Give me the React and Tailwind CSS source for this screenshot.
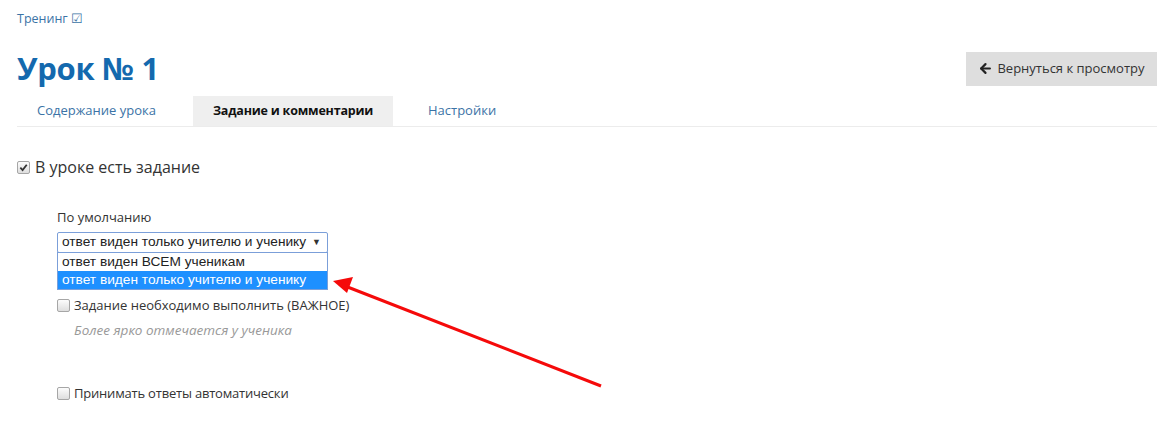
import { ArrowLeft } from 'lucide-react';

function Checkbox({ checked }) {
  return (
    <span className="inline-flex w-[13px] h-[13px] shrink-0 items-center justify-center rounded-[2px] border border-[#a6a6a6] bg-gradient-to-b from-[#fcfcfc] to-[#dedede]">
      {checked && (
        <svg width="9" height="9" viewBox="0 0 10 10">
          <path d="M1.5 5.2 L4 7.8 L8.6 2" fill="none" stroke="#333" strokeWidth="2" />
        </svg>
      )}
    </span>
  );
}

export default function App() {
  return (
    <div className="w-[1167px] h-[428px] bg-white relative overflow-hidden" style={{ fontFamily: '"Open Sans", Arial, sans-serif' }}>
      <div className="pl-[17px] pr-[10px] pt-[11px]">
        {/* Breadcrumb */}
        <div className="text-[12.5px] text-[#3b73a6] leading-[16px]">Тренинг ☑</div>

        {/* Header */}
        <div className="flex items-center justify-between mt-[24px] h-[35px]">
          <h1 className="text-[31px] font-bold text-[#1469ae] leading-none tracking-[-0.3px]">Урок № 1</h1>
          <button className="h-[34px] w-[191px] justify-center bg-[#dedede] flex items-center gap-[4px] text-[13px] text-[#333]">
            <ArrowLeft size={15} strokeWidth={3.5} className="text-[#222]" />
            Вернуться к просмотру
          </button>
        </div>

        {/* Tabs */}
        <div className="mt-[10px] flex border-b border-[#ececec] h-[31px]">
          <div className="w-[161px] pl-[20px] flex items-center text-[13px] text-[#3b73a6]">Содержание урока</div>
          <div className="ml-[15px] w-[200px] justify-center flex items-center text-[12.5px] font-bold text-[#111] bg-[#efefef] tracking-[-0.2px]">Задание и комментарии</div>
          <div className="ml-[35px] flex items-center text-[13px] text-[#3b73a6]">Настройки</div>
        </div>

        {/* Body */}
        <label className="mt-[30px] flex items-center gap-[5px] text-[16px] text-[#333] leading-[20px]">
          <Checkbox checked />
          В уроке есть задание
        </label>

        <div className="ml-[40px] mt-[32px]">
          <div className="text-[13px] text-[#333] leading-[16px]">По умолчанию</div>
          <div className="relative mt-[7px] w-[271px]">
            <div
              className="h-[21px] border border-[#7b9fd9] rounded-[2px] flex items-center justify-between pl-[4px] pr-[6px] text-[13.7px] text-[#222]"
              style={{ fontFamily: '"Liberation Sans", Arial, sans-serif' }}
            >
              <span>ответ виден только учителю и ученику</span>
              <span className="text-[9px] text-[#333]">▼</span>
            </div>
            <div
              className="absolute left-0 top-[20px] w-[271px] border border-[#7b9fd9] bg-white text-[13.7px] z-10"
              style={{ fontFamily: '"Liberation Sans", Arial, sans-serif' }}
            >
              <div className="h-[18px] pl-[4px] flex items-center text-[#222]">ответ виден ВСЕМ ученикам</div>
              <div className="h-[18px] pl-[4px] flex items-center text-white bg-[#1e90ff]">ответ виден только учителю и ученику</div>
            </div>
          </div>

          <label className="mt-[44px] flex items-center gap-[4px] text-[13px] text-[#333] leading-[16px]">
            <Checkbox />
            Задание необходимо выполнить (ВАЖНОЕ)
          </label>
          <div className="mt-[9px] ml-[17px] text-[13.5px] italic text-[#999] leading-[16px]">Более ярко отмечается у ученика</div>

          <label className="mt-[47px] flex items-center gap-[4px] text-[13px] text-[#333] leading-[16px] tracking-[-0.2px]">
            <Checkbox />
            Принимать ответы автоматически
          </label>
        </div>
      </div>

      {/* Annotation arrow */}
      <svg className="absolute left-0 top-0 pointer-events-none" width="1167" height="428">
        <line x1="601" y1="386" x2="345" y2="286" stroke="#f50a0a" strokeWidth="3" />
        <polygon points="333,281 353,277 347,293" fill="#f50a0a" />
      </svg>
    </div>
  );
}
